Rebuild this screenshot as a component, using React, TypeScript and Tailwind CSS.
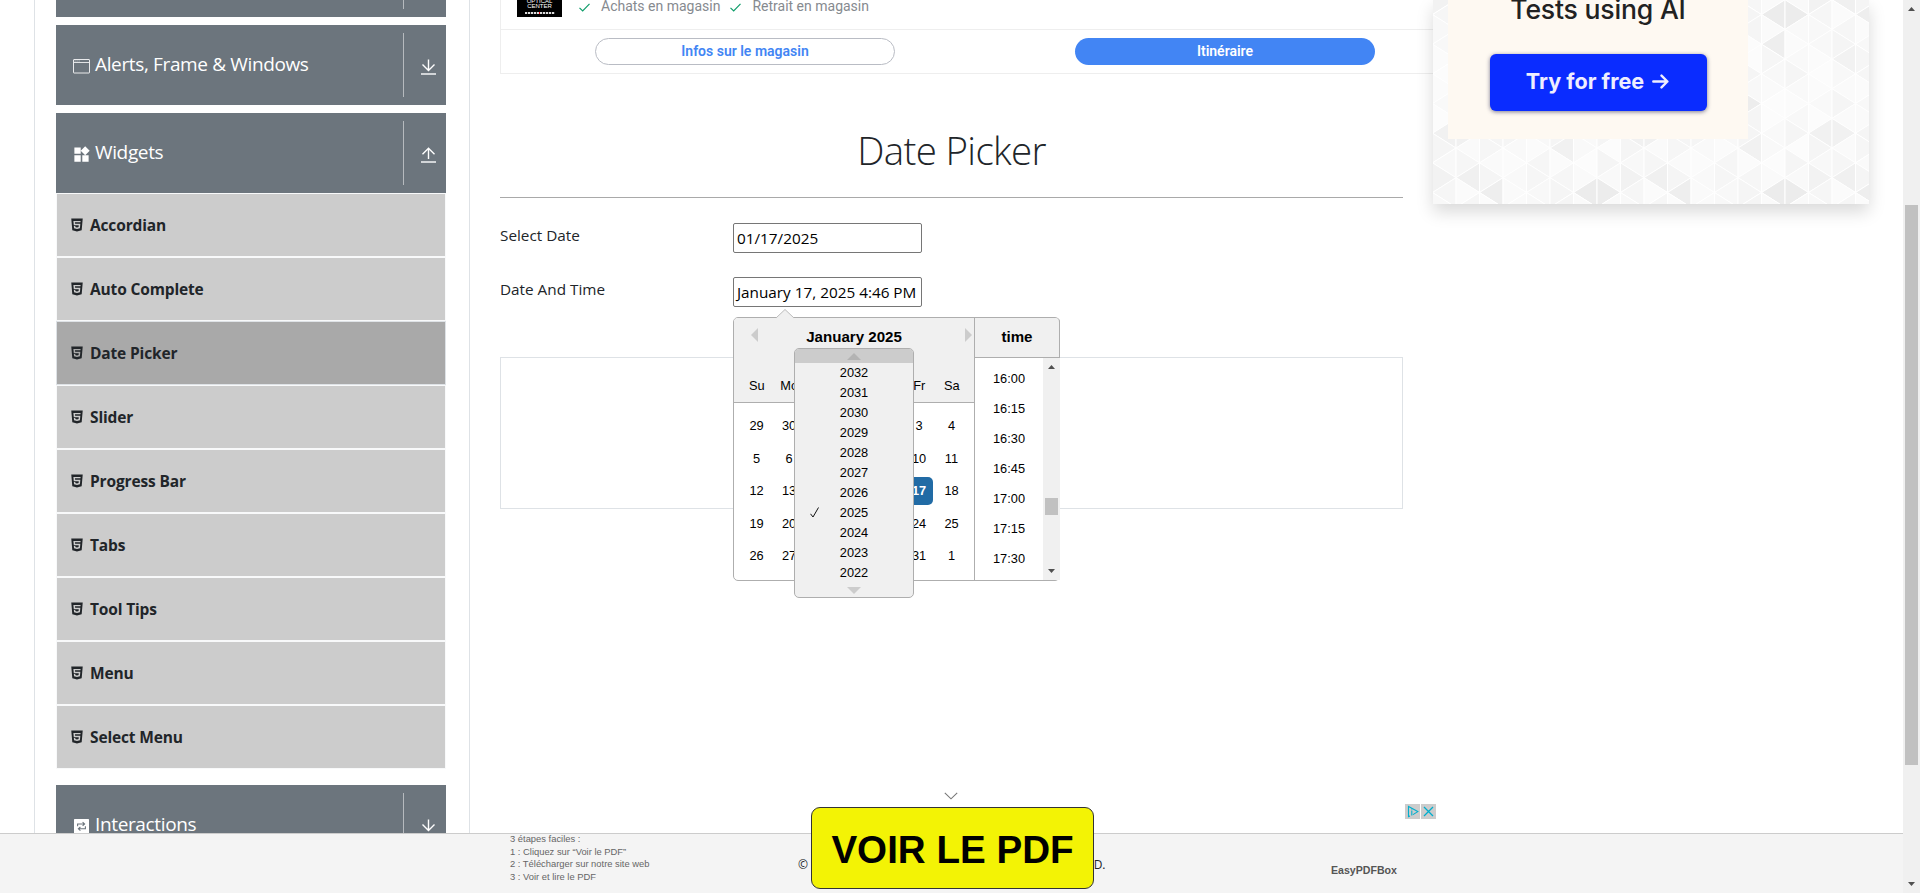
import React from "react";
import { AiFillHtml5 } from "react-icons/ai";
import { MdWidgets } from "react-icons/md";

function WindowIcon() {
  return (
    <svg className="h-[17px] w-[17px] shrink-0" viewBox="0 0 17 17" fill="none" stroke="currentColor">
      <rect x="0.5" y="1.5" width="16" height="13.5" rx="0.5" strokeOpacity="0.85" />
      <path d="M1 4.5h15" strokeOpacity="0.8" />
      <path d="M1.5 3h6" strokeOpacity="0.6" strokeDasharray="1.2 0.8" />
    </svg>
  );
}

function RepeatIcon() {
  return (
    <svg className="ml-px h-[15px] w-[15px] shrink-0" viewBox="0 0 15 15">
      <rect width="15" height="15" rx="0.6" fill="currentColor" />
      <g fill="none" stroke="#6c757d" strokeWidth="1.1">
        <path d="M3.6 7.3V5h6.3M8.6 3.2 10.6 5 8.6 6.8" />
        <path d="M11.4 7.2v2.6H5.1M6.4 8 4.4 9.8l2 1.8" />
      </g>
    </svg>
  );
}

function ToggleArrow({ up }: { up?: boolean }) {
  return (
    <svg className="h-4 w-[15px]" viewBox="0 0 15 16" fill="none" stroke="#fff" strokeWidth="1.4">
      {up ? <path d="M7.5 12V1.5M1.5 7.2 7.5 1.3l6 5.9" /> : <path d="M7.5 0.5v10.8M1.5 5.5l6 6 6-6" />}
      <path d="M0 15h15" />
    </svg>
  );
}

function GroupHeader({ icon, label, up }: { icon?: React.ReactNode; label: string; up?: boolean }) {
  return (
    <div className="flex h-20 shrink-0 items-center bg-[#6c757d] text-white">
      <div className="flex flex-1 items-center pl-[17px]">
        <span className="flex w-[22px] pt-[3px]">{icon}</span>
        <span className="pb-0.5 text-[19px] leading-6 tracking-[-0.36px]">{label}</span>
      </div>
      <div className="flex h-16 w-[43px] items-center justify-center border-l border-white/50 pl-[7px] pt-[4px]">
        <ToggleArrow up={up} />
      </div>
    </div>
  );
}

const items = ["Accordian", "Auto Complete", "Date Picker", "Slider", "Progress Bar", "Tabs", "Tool Tips", "Menu", "Select Menu"];

function Sidebar() {
  return (
    <aside className="flex w-[436px] shrink-0 flex-col gap-2 border-x border-[#dee2e6] pl-[21px] pr-[23px]">
      <div className="-mt-[63px]">
        <GroupHeader label="" />
      </div>
      <GroupHeader icon={<WindowIcon />} label="Alerts, Frame & Windows" />
      <div>
        <GroupHeader icon={<MdWidgets className="-ml-px size-[19px]" />} label="Widgets" up />
        <ul>
          {items.map((t) => (
            <li
              key={t}
              className={
                t === "Date Picker"
                  ? "flex h-16 items-center border border-[#dee2e6] bg-[#a9a9a9] pl-3"
                  : "flex h-16 items-center border border-[#f8f9fa] bg-[#ccc] pl-3"
              }
            >
              <AiFillHtml5 className="mr-[5px] size-4 text-[#212529]" />
              <span className="text-[15.5px] font-bold leading-6 tracking-[-0.15px] text-[#212529]">{t}</span>
            </li>
          ))}
        </ul>
      </div>
      <div className="pt-2">
        <GroupHeader icon={<RepeatIcon />} label="Interactions" />
      </div>
    </aside>
  );
}

function Tick() {
  return (
    <svg className="h-[9px] w-[11px]" viewBox="0 0 11 9" fill="none" stroke="#0f9d6a" strokeWidth="1.2">
      <path d="M0.5 4.8 3.7 8 10.5 0.8" />
    </svg>
  );
}

function StoreAd() {
  return (
    <div className="h-[74px] w-[940px] border-b border-l border-[#eee] font-[Roboto,sans-serif]">
      <div className="flex h-[30px] items-start border-b border-[#eee] pl-4 text-[14px] text-[#868a8f]">
        <div className="flex h-[17px] w-[45px] flex-col items-center overflow-hidden bg-black text-white">
          <span className="-mt-[1px] font-['Liberation_Sans',sans-serif] text-[6px] leading-[5px]">OPTICAL</span>
          <span className="font-['Liberation_Sans',sans-serif] text-[6px] leading-[5px]">CENTER</span>
          <span className="mt-[3px] flex h-[2px] w-[30px] bg-[repeating-linear-gradient(90deg,#ddd_0_2px,#333_2px_3px)]">
            <span className="ml-[14px] w-px bg-red-600" />
          </span>
        </div>
        <div className="flex items-center pl-[17px] leading-[13px]">
          <span className="pt-0.5"><Tick /></span>
          <span className="ml-[11px] mr-[10px]">Achats en magasin</span>
          <span className="pt-0.5"><Tick /></span>
          <span className="ml-[11px]">Retrait en magasin</span>
        </div>
      </div>
      <div className="flex h-[43px] items-center pl-[94px] text-[14px] font-semibold">
        <div className="flex h-[27px] w-[300px] items-center justify-center rounded-full border border-[#b9bcc4] text-[#4285f4]">Infos sur le magasin</div>
        <div className="ml-[180px] flex h-[27px] w-[300px] items-center justify-center rounded-full bg-[#4285f4] text-white">Itinéraire</div>
      </div>
    </div>
  );
}

function Field({ label, value }: { label: string; value: string }) {
  return (
    <div className="flex h-[30px]">
      <div className="w-[233px] text-[15.3px] leading-6 text-[#212529]">{label}</div>
      <div className="flex h-[30px] w-[189px] items-center whitespace-nowrap rounded-[2px] border border-[#767676] pl-[3px] text-[15.3px] text-black">
        {value}
      </div>
    </div>
  );
}

const weeks = [
  [29, 30, 31, 1, 2, 3, 4],
  [5, 6, 7, 8, 9, 10, 11],
  [12, 13, 14, 15, 16, 17, 18],
  [19, 20, 21, 22, 23, 24, 25],
  [26, 27, 28, 29, 30, 31, 1],
];
const times = ["16:00", "16:15", "16:30", "16:45", "17:00", "17:15", "17:30"];
const years = [2032, 2031, 2030, 2029, 2028, 2027, 2026, 2025, 2024, 2023, 2022];

function Calendar() {
  return (
    <div className="absolute left-[233px] top-[119px] flex h-[264px] w-[327px] rounded-[5px] border border-[#aeaeae] bg-white font-['Liberation_Sans',sans-serif] text-[13px] text-black">
      <svg className="absolute -top-[9px] left-[42px] h-[10px] w-[18px]" viewBox="0 0 18 10">
        <path d="M0 10V9L9 0.5 18 9v1z" fill="#f0f0f0" />
        <path d="M0 9 9 0.5 18 9" fill="none" stroke="#bbb" />
      </svg>
      <div className="flex w-[242px] flex-col border-r border-[#aeaeae]">
        <div className="flex h-[85px] flex-col justify-between rounded-tl-[4px] border-b border-[#aeaeae] bg-[#f0f0f0]">
          <div className="flex items-start pl-[17px] pr-[2px] pt-2.5">
            <svg className="h-[14px] w-[7px]" viewBox="0 0 7 14"><path d="M7 0v14L0 7z" fill="#ccc" /></svg>
            <span className="ml-[7px] w-[178px] text-center text-[15.1px] font-bold leading-[18px]">January 2025</span>
            <svg className="ml-auto h-[14px] w-[7px]" viewBox="0 0 7 14"><path d="M0 0v14l7-7z" fill="#ccc" /></svg>
          </div>
          <div className="flex pb-[3px] pl-[6.5px] text-[12.8px]">
            {["Su", "Mo", "Tu", "We", "Th", "Fr", "Sa"].map((d) => (
              <span key={d} className="w-[32.5px] text-center leading-[27px]">{d}</span>
            ))}
          </div>
        </div>
        <div className="flex flex-col gap-[4.6px] pl-[8.5px] pt-[9px] text-[12.8px]">
          {weeks.map((w, i) => (
            <div key={i} className="flex gap-[4.5px]">
              {w.map((d, j) => (
                <span
                  key={j}
                  className={
                    d === 17
                      ? "h-7 w-7 rounded-[5px] bg-[#216ba5] text-center font-bold leading-[27px] text-white"
                      : "h-7 w-7 text-center leading-[27px]"
                  }
                >
                  {d}
                </span>
              ))}
            </div>
          ))}
        </div>
      </div>
      <div className="flex w-[84px] flex-col">
        <div className="-mr-px flex h-10 items-center justify-center rounded-tr-[4px] border-b border-r border-[#aeaeae] bg-[#f0f0f0] text-[15.1px] font-bold">time</div>
        <div className="flex flex-1">
          <div className="flex w-[68px] flex-col pt-[5px] text-[12.8px]">
            {times.map((t) => (
              <span key={t} className="h-[30px] text-center leading-[31px]">{t}</span>
            ))}
          </div>
          <div className="-mr-px flex w-[17px] flex-col items-center justify-between bg-[#f0f0f0] py-[7px]">
            <svg className="h-1 w-[7px]" viewBox="0 0 7 4"><path d="M0 4h7L3.5 0z" fill="#505050" /></svg>
            <div className="mt-[74px] h-[17px] w-[13px] bg-[#c1c1c1]" />
            <svg className="h-1 w-[7px]" viewBox="0 0 7 4"><path d="M0 0h7L3.5 4z" fill="#505050" /></svg>
          </div>
        </div>
      </div>
      <div className="absolute left-[60px] top-[30px] flex w-[120px] flex-col overflow-hidden rounded-[5px] border border-[#aeaeae] bg-[#f0f0f0] text-[12.8px]">
        <div className="flex h-[14px] items-center justify-center bg-[#ccc]">
          <svg className="h-[7px] w-[14px]" viewBox="0 0 14 7"><path d="M0 7h14L7 0z" fill="#b3b3b3" /></svg>
        </div>
        {years.map((y) => (
          <div key={y} className="relative h-5 text-center leading-[19px]">
            {y === 2025 && (
              <svg className="absolute left-[15px] top-1 h-[11px] w-[9px]" viewBox="0 0 9 11" fill="none" stroke="#111">
                <path d="M0.5 6.8 3 10 8.5 0.5" />
              </svg>
            )}
            {y}
          </div>
        ))}
        <div className="flex h-[14px] items-center justify-center">
          <svg className="h-[7px] w-[14px]" viewBox="0 0 14 7"><path d="M0 0h14L7 7z" fill="#ccc" /></svg>
        </div>
      </div>
    </div>
  );
}

function Content() {
  return (
    <main className="ml-[30px] w-[903px] shrink-0">
      <StoreAd />
      <h1 className="flex h-[124px] items-center justify-center border-b border-[#a9a9a9] pt-[30px] text-[38.5px] font-light tracking-[-0.65px] text-[#212529]">Date Picker</h1>
      <div className="relative pt-[25px]">
        <div className="flex flex-col gap-6">
          <Field label="Select Date" value="01/17/2025" />
          <Field label="Date And Time" value="January 17, 2025 4:46 PM" />
        </div>
        <div className="mt-[50px] h-[152px] border border-[#dee2e6]" />
        <Calendar />
      </div>
    </main>
  );
}

const COL = 23.5;
const ROW = 14.83;

// Shaded facets, keyed by column and row inside one 8 x 12 pattern tile.
const shaded: Record<string, string> = {
  "5,2": "#ececec",
  "6,2": "#ececec",
  "1,2": "#eeeeee",
  "7,1": "#f2f2f2",
  "0,1": "#f0f0f0",
  "5,4": "#eeeeee",
  "7,10": "#f1f1f1",
  "0,10": "#f1f1f1",
  "4,8": "#ededed",
  "4,11": "#f1f1f1",
  "0,5": "#f2f2f2",
  "2,8": "#f2f2f2",
};
const tints = ["#f6f6f6", "#f9f9f9", "#fbfbfb", "#f8f8f8", "#fafafa", "#f5f5f5", "#fcfcfc"];

function Mosaic() {
  const tris: { d: string; f: string }[] = [];
  for (let k = -1; k < 19; k++) {
    for (let r = -1; r < 16; r++) {
      const x = 23 + k * COL;
      const y = 177.7 - (13 - r) * ROW;
      const right = (k + r + 100) % 2 === 0;
      const d = right
        ? `M${x} ${y - ROW}L${x + COL} ${y}L${x} ${y + ROW}z`
        : `M${x + COL} ${y - ROW}L${x} ${y}L${x + COL} ${y + ROW}z`;
      const a = (k + 8) % 8;
      const b = (r + 12) % 12;
      const n = Math.floor(Math.abs(Math.sin(a * 12.98 + b * 78.23) * 43758.5)) % tints.length;
      tris.push({ d, f: shaded[`${a},${b}`] ?? tints[n] });
    }
  }
  return (
    <svg className="absolute inset-0 h-full w-full" viewBox="0 0 436 204" stroke="#fff" strokeWidth="1">
      {tris.map((t, i) => (
        <path key={i} d={t.d} fill={t.f} />
      ))}
    </svg>
  );
}

function PromoCard() {
  return (
    <aside className="relative ml-[30px] h-[204px] w-[436px] shrink-0 bg-[#f9f9f9] pl-[15px] shadow-[0_8px_16px_rgba(0,0,0,0.15)]">
      <Mosaic />
      <div className="relative flex h-[139px] w-[300px] flex-col items-center bg-[#fef9f2] font-[Inter,sans-serif]">
        <div className="-mt-[7px] text-[26.6px] font-medium leading-8 tracking-[-0.2px] text-[#222]">Tests using AI</div>
        <div className="mt-[29px] flex h-[57px] w-[217px] items-center justify-center gap-2 rounded-[6px] bg-[#0a2cff] pb-0.5 pr-px text-[21.6px] font-bold text-[#eef] shadow-[0_1px_4px_rgba(40,40,80,0.6)]">
          <span>Try for free</span>
          <svg className="h-[15px] w-[17px]" viewBox="0 0 17 15" fill="none" stroke="#eef" strokeWidth="2.4" strokeLinecap="round" strokeLinejoin="round"><path d="M1.3 7.5h14M9.5 1.6l5.9 5.9-5.9 5.9" /></svg>
        </div>
      </div>
    </aside>
  );
}

function AnchorAd() {
  return (
    <div className="absolute left-[500px] top-[784px] h-[109px] w-[937px] font-['Liberation_Sans',sans-serif]">
      <svg className="absolute left-[444px] top-[8px] h-2 w-[14px]" viewBox="0 0 14 8" fill="none" stroke="#777" strokeWidth="1.1"><path d="M0.8 0.8 7 6.8l6.2-6" /></svg>
      <div className="absolute left-[905px] top-5 flex gap-px">
        <svg className="size-[15px] bg-[#ccc]" viewBox="0 0 15 15" fill="none" stroke="#00aecd" strokeWidth="1.1"><path d="M5 12 3.5 12.6V2.5L12.8 7.6 8 10.6" /><path d="M6.8 6.6v5M6.8 4.4v1" /></svg>
        <svg className="size-[15px] bg-[#ccc]" viewBox="0 0 15 15" fill="none" stroke="#00aecd" strokeWidth="1.3"><path d="m3 3 9 9M12 3l-9 9" /></svg>
      </div>
      <div className="absolute left-[10px] top-[49px] text-[9.4px] leading-[12.5px] text-[#666]">
        <div>3 étapes faciles :</div>
        <div>1 : Cliquez sur “Voir le PDF”</div>
        <div>2 : Télécharger sur notre site web</div>
        <div>3 : Voir et lire le PDF</div>
      </div>
      <div className="absolute left-[311px] top-[23px] flex h-[82px] w-[283px] items-center justify-center rounded-[9px] border border-[#333] bg-[#f3f305] pt-[3px] text-[38.6px] font-bold text-black">
        VOIR LE PDF
      </div>
      <div className="absolute left-[831px] top-[79px] text-[10.6px] font-bold leading-[14px] text-[#555]">EasyPDFBox</div>
    </div>
  );
}

export default function App() {
  return (
    <div className="relative flex h-[893px] w-[1920px] overflow-hidden bg-white font-['Open_Sans',sans-serif]">
      <div className="flex h-full w-[1903px] flex-col">
        <div className="flex h-[833px] shrink-0 overflow-hidden pl-[34px]">
          <Sidebar />
          <Content />
          <PromoCard />
        </div>
        <footer className="flex h-[60px] items-center justify-center border-t border-[#ccc] bg-[#f4f4f4] pt-0.5 text-[12px] leading-5 text-[#212529]">
          <div className="flex w-[307px] justify-between whitespace-nowrap">
            <span>© 2013-2020 TOOLSQA.COM |</span>
            <span className="tracking-[-0.3px]">ALL RIGHTS RESERVED.</span>
          </div>
        </footer>
      </div>
      <div className="flex w-[17px] flex-col items-center bg-[#f0f0f0] pt-[7px]">
        <svg className="h-1 w-[7px]" viewBox="0 0 7 4"><path d="M0 4h7L3.5 0z" fill="#505050" /></svg>
        <div className="mt-[194px] h-[560px] w-[13px] bg-[#c1c1c1]" />
        <svg className="mt-[117px] h-1 w-[7px]" viewBox="0 0 7 4"><path d="M0 0h7L3.5 4z" fill="#505050" /></svg>
      </div>
      <AnchorAd />
    </div>
  );
}
